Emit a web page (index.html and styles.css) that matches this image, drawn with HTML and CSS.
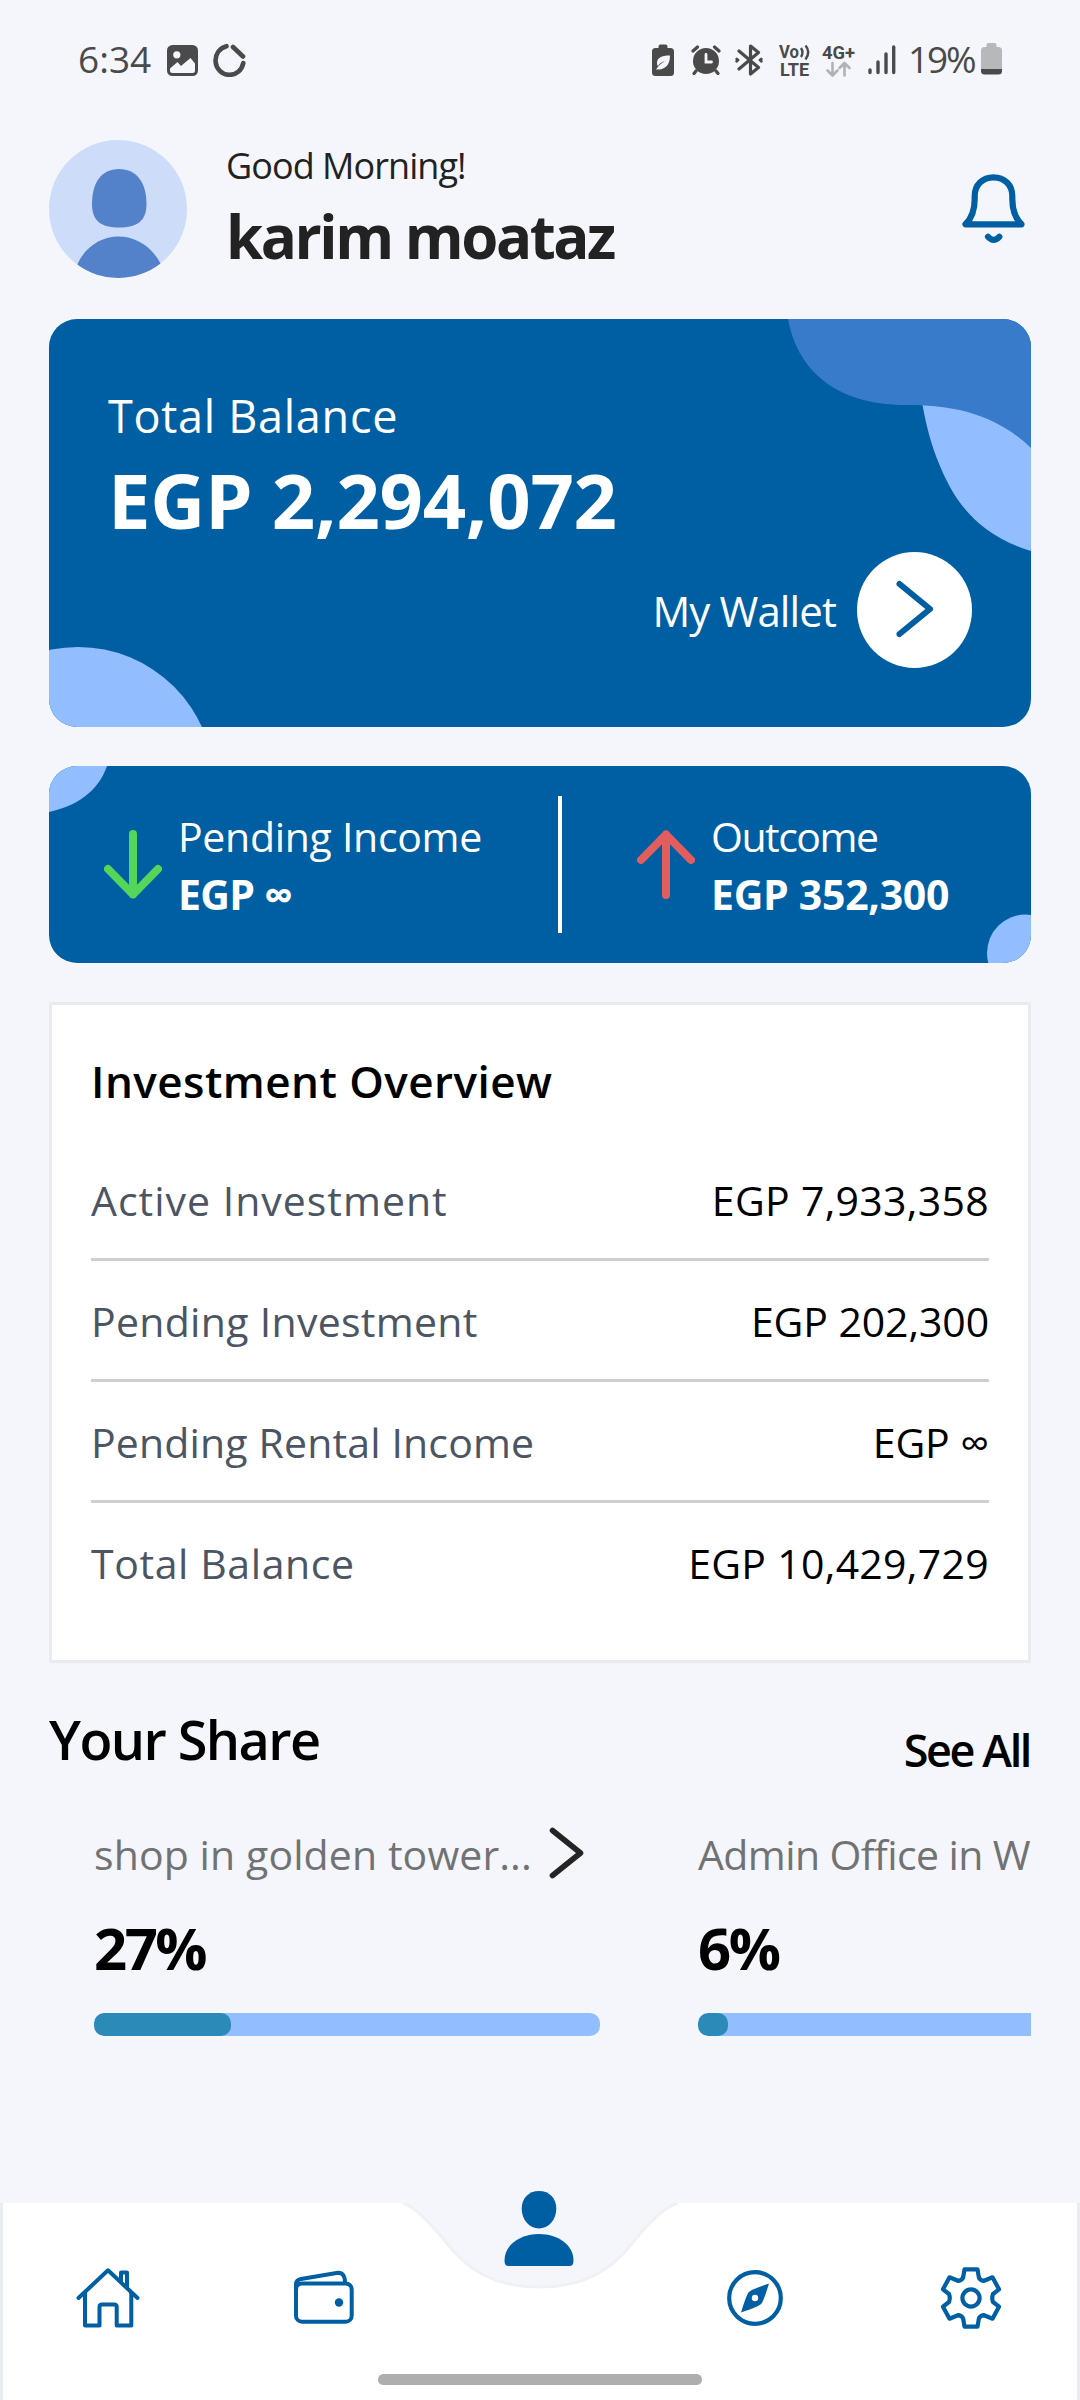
FILE: index.html
```html
<!DOCTYPE html>
<html lang="en">
<head>
<meta charset="utf-8">
<title>Wallet home</title>
<link rel="stylesheet" href="styles.css">
</head>
<body>
<div class="status">
  <span class="status-time">6:34</span>
  <svg class="st-image" width="31" height="31" viewBox="0 0 31 31"><rect width="31" height="31" rx="5.5" fill="#4a4a4a"/><circle cx="9.8" cy="9.8" r="3.6" fill="#f4f6fb"/><path d="M3 23.5L10.5 17L14 21L23.500 13L28 18.500V25.500Q28 28 25.500 28H5.500Q3 28 3 25.500Z" fill="#f4f6fb"/></svg>
  <svg class="st-ring" width="33" height="34" viewBox="0 0 33 34" fill="none" stroke="#4a4a4a" stroke-width="4.600" stroke-linecap="round"><path d="M13.500 3.200A14 14.500 0 1 0 30.300 20"/><path d="M20 4L30 13.500"/></svg>
  <svg class="st-saver" width="22" height="33" viewBox="0 0 22 33"><path d="M6.500 2.500Q6.500 0.500 8.500 0.500H13.500Q15.500 0.500 15.500 2.500V4H18.500Q22 4 22 7.500V28.500Q22 32 18.500 32H3.500Q0 32 0 28.500V7.500Q0 4 3.500 4H6.500Z" fill="#4a4a4a"/><path d="M18 11.500C9 11.500 5 14 5 19C5 20.500 5.500 21.500 6 22C8 19 10 18 13 17C9.500 19 6 22 4 25.500C10 26 18 24 18 11.500Z" fill="#f4f6fb"/></svg>
  <svg class="st-alarm" width="30" height="30" viewBox="0 0 30 30" stroke="#4a4a4a" stroke-linecap="round"><circle cx="15" cy="16" r="13" fill="#4a4a4a" stroke="none"/><path d="M2 6L6.500 2M28 6L23.500 2" stroke-width="3.200"/><path d="M5 26L3 28.500M25 26L27 28.500" stroke-width="3.200"/><path d="M15 9.500V17H20.500" fill="none" stroke="#f4f6fb" stroke-width="2.800"/></svg>
  <svg class="st-bt" width="28" height="32" viewBox="0 0 28 32" fill="none" stroke="#4a4a4a" stroke-width="3.200" stroke-linecap="round" stroke-linejoin="round"><path d="M4 7L23.500 23.500L15.500 30V2L23.500 8.500L4 25"/><path d="M1.700 15L3 16L1.700 17.200M26.300 15L25 16L26.300 17.200" stroke-width="2.800"/></svg>
  <svg class="st-volte" width="32" height="38" viewBox="0 -3 32 38" fill="#4a4a4a"><text class="tiny" x="0" y="14" textLength="20" lengthAdjust="spacingAndGlyphs">Vo</text><text class="tiny" x="1" y="32" textLength="29" lengthAdjust="spacingAndGlyphs">LTE</text><path d="M22 4Q25 8.500 22 13M26.500 1.500Q32 8 26.500 15.500" fill="none" stroke="#4a4a4a" stroke-width="2.400"/></svg>
  <svg class="st-net" width="34" height="38" viewBox="0 -3 34 38"><text class="tiny" x="0" y="14.500" textLength="33" lengthAdjust="spacingAndGlyphs" fill="#4a4a4a">4G+</text><path d="M10.500 19V31M5.500 26.500L10.500 31.500L15.500 26.500M22.500 31.500V19.500M17.500 24L22.500 19L27.500 24" fill="none" stroke="#b0b2b6" stroke-width="2.600" stroke-linecap="round" stroke-linejoin="round"/></svg>
  <svg class="st-signal" width="28" height="30" viewBox="0 0 28 30" stroke="#4a4a4a" stroke-width="3.400" stroke-linecap="round"><path d="M2 25V27.500M10 17V27.500M18 9V27.500M25.700 2V27.500"/></svg>
  <span class="status-pct">19%</span>
  <svg class="st-battery" width="21" height="32" viewBox="0 0 21 32"><path d="M5.500 2Q5.500 0 7.500 0H13.500Q15.500 0 15.500 2V4H17.500Q21 4 21 7.500V26H0V7.500Q0 4 3.500 4H5.500Z" fill="#b7b8ba"/><path d="M0 26H21V28Q21 31.500 17.500 31.500H3.500Q0 31.500 0 28Z" fill="#4a4a4a"/></svg>
</div>

<header class="header">
  <svg class="avatar" width="138" height="138" viewBox="0 0 138 138"><circle cx="69" cy="69" r="69" fill="#cdddf9"/><path d="M70 29C88 29 97.500 43 97.500 64C97.500 81 88 87.500 70 87.500C52 87.500 43 81 43 64C43 43 52 29 70 29Z" fill="#5382ca"/><path d="M28.300 124.500C36 107 52 96.500 69.500 96.500S103 107 111.500 123.500A69 69 0 0 1 28.300 124.500Z" fill="#5382ca"/></svg>
  <div class="hello">
    <div class="greeting">Good Morning!</div>
    <div class="name">karim moataz</div>
  </div>
  <svg class="bell" width="67" height="73" viewBox="0 0 67 73" fill="none" stroke="#005fa2" stroke-width="6.200" stroke-linecap="round" stroke-linejoin="round"><path d="M5.500 52.300H61.500C55 46 52.300 38 52.300 27V24C52.300 13 44.500 5.300 33.500 5.300S14.700 13 14.700 24V27C14.700 38 12 46 5.500 52.300Z"/><path d="M28 64.800Q33.500 71 39.300 64.800"/></svg>
</header>

<section class="balance">
  <svg class="blobs" width="982" height="408" viewBox="0 0 982 408"><path d="M873.500 86C877 104 882 132 901 168C914 192 938 219 982 232V80Z" fill="#92beff"/><path d="M739 0C748 50 786 87 860 86C908 86 949 97 982 129V0Z" fill="#387bca"/><circle cx="29" cy="464" r="136" fill="#92beff"/></svg>
  <div class="balance-label">Total Balance</div>
  <div class="balance-value">EGP 2,294,072</div>
  <div class="wallet">
    <span class="wallet-label">My Wallet</span>
    <span class="wallet-btn"><svg width="38" height="58" viewBox="0 0 38 58" fill="none" stroke="#005fa2" stroke-width="6" stroke-linecap="round" stroke-linejoin="round"><path d="M3.500 4L34 29L3.500 54"/></svg></span>
  </div>
</section>

<section class="flows">
  <svg class="blobs" width="982" height="197" viewBox="0 0 982 197"><path d="M0 0H58C49 26 27 40 0 46Z" fill="#92beff"/><circle cx="976.500" cy="187" r="38.500" fill="#92beff"/></svg>
  <div class="flow flow-in">
    <svg width="58" height="69" viewBox="0 0 58 69" fill="none" stroke="#53d65a" stroke-width="8" stroke-linecap="round" stroke-linejoin="round"><path d="M29 4V64.500M4 39L29 64.500L54 39"/></svg>
    <div class="flow-text"><div class="flow-label pend">Pending Income</div><div class="flow-value inf">EGP ∞</div></div>
  </div>
  <div class="flow-divider"></div>
  <div class="flow flow-out">
    <svg width="58" height="69" viewBox="0 0 58 69" fill="none" stroke="#e25d5d" stroke-width="8" stroke-linecap="round" stroke-linejoin="round"><path d="M29 65V4.500M4 30L29 4.500L54 30"/></svg>
    <div class="flow-text"><div class="flow-label outc">Outcome</div><div class="flow-value">EGP 352,300</div></div>
  </div>
</section>

<section class="overview">
  <h2 class="overview-title">Investment Overview</h2>
  <div class="row"><span class="key key-active">Active Investment</span><span class="val">EGP 7,933,358</span></div>
  <div class="row"><span class="key">Pending Investment</span><span class="val val-tight">EGP 202,300</span></div>
  <div class="row"><span class="key key-rental">Pending Rental Income</span><span class="val val-tight">EGP ∞</span></div>
  <div class="row"><span class="key key-total">Total Balance</span><span class="val">EGP 10,429,729</span></div>
</section>

<div class="share-head">
  <h2 class="share-title">Your Share</h2>
  <span class="see-all">See All</span>
</div>

<div class="shares">
  <article class="share">
    <div class="share-name"><span>shop in golden tower...</span><svg class="chev" width="35" height="52" viewBox="0 0 35 52" fill="none" stroke="#242424" stroke-width="5.600" stroke-linecap="round" stroke-linejoin="round"><path d="M3.500 3.500L31.500 26L3.500 48.500"/></svg></div>
    <div class="share-pct">27%</div>
    <div class="bar"><div class="fill" style="width:27%"></div></div>
  </article>
  <article class="share">
    <div class="share-name office"><span>Admin Office in W</span></div>
    <div class="share-pct">6%</div>
    <div class="bar"><div class="fill" style="width:6%"></div></div>
  </article>
</div>

<nav class="nav">
  <svg class="nav-bg" width="1080" height="197" viewBox="0 0 1080 197"><path d="M0 0H403C416 4 432 22 445 38C468 68 495 84 539.500 84C584 84 611 68 634 38C647 22 663 4 678 0H1080V197H0Z" fill="#fff"/><path d="M403 0C416 4 432 22 445 38C468 68 495 84 539.500 84C584 84 611 68 634 38C647 22 663 4 678 0" fill="none" stroke="#eff1f4" stroke-width="3"/><path d="M1.500 0V197M1078.500 0V197" fill="none" stroke="#e9edf1" stroke-width="3"/></svg>
  <div class="tab"><svg width="64" height="60" viewBox="0 0 64 60" fill="none" stroke="#005fa2" stroke-width="4" stroke-linecap="round" stroke-linejoin="round"><path d="M2.500 30L32 2.300L61.500 30"/><path d="M9 25V57.500H23.500V39Q23.500 36.500 26 36.500H38.200Q40.700 36.500 40.700 39V57.500H55.300V25"/><path d="M45 13V4.500H51V19"/></svg></div>
  <div class="tab"><svg width="60" height="56" viewBox="0 0 60 56" fill="none" stroke="#005fa2" stroke-width="4"><rect x="2" y="13.500" width="55.700" height="38.200" rx="6"/><path d="M2 19V14.500Q2 10 7 9L44 2.700Q51 2.500 51 12.500" stroke-linejoin="round"/><circle cx="45" cy="32.500" r="4.200" fill="#005fa2" stroke="none"/></svg></div>
  <div class="tab tab-me"><svg width="70" height="76" viewBox="0 0 70 76" fill="#005fa2"><path d="M35 0C45.500 0 52.300 7.500 52.300 17.500C52.300 29 44.500 37.500 35 37.500S17.700 29 17.700 17.500C17.700 7.500 24.500 0 35 0Z"/><path d="M35 43C54 43 69.500 54 69.500 69.500Q69.500 75 65.500 75H4.500Q0.500 75 0.500 69.500C0.500 54 16 43 35 43Z"/></svg></div>
  <div class="tab"><svg width="58" height="58" viewBox="-29 -29 58 58"><circle r="25.800" fill="none" stroke="#005fa2" stroke-width="4.200"/><path d="M14 -14.500Q8.500 3.500 6.300 5.800Q4 8.500 -14 14.500Q-8.500 -3.500 -6.300 -5.800Q-4 -8.500 14 -14.500ZM0 -3.200A3.200 3.200 0 1 0 0 3.200A3.200 3.200 0 1 0 0 -3.200Z" fill="#005fa2" fill-rule="evenodd"/></svg></div>
  <div class="tab"><svg width="62" height="64" viewBox="-31 -32 62 64" fill="none" stroke="#005fa2" stroke-width="4.200" stroke-linejoin="round"><path d="M-6.500 -28.700H6.500L7.800 -21Q8.500 -18 12.500 -17L21.500 -20.700L28 -8.700L22 -4Q20.500 0 22 4L28 8.700L21.500 20.700L12.500 17Q8.500 18 7.800 21L6.500 28.700H-6.500L-7.800 21Q-8.500 18 -12.500 17L-21.500 20.700L-28 8.700L-22 4Q-20.500 0 -22 -4L-28 -8.700L-21.500 -20.700L-12.500 -17Q-8.500 -18 -7.800 -21Z"/><circle r="8.600"/></svg></div>
  <div class="home-indicator"></div>
</nav>
</body>
</html>
```
FILE: styles.css
```css
* { box-sizing: border-box; }
body {
  margin: 0;
  width: 1080px;
  height: 2400px;
  overflow: hidden;
  display: flex;
  flex-direction: column;
  background: #f4f6fb;
  font-family: "Open Sans", sans-serif;
  font-size: 41px;
  color: #000;
}
svg { display: block; flex: none; }
h2 { margin: 0; }
span, div { white-space: nowrap; }

/* status bar */
.status {
  height: 120px;
  padding-left: 78px;
  display: flex;
  align-items: center;
  color: #4a4a4a;
  font-size: 37px;
  line-height: 50px;
}
.status-time { width: 89px; margin-top: -3px; }
.st-ring { margin-left: 15px; }
.st-saver { margin-left: 406px; }
.st-alarm { margin-left: 17px; }
.st-bt { margin-left: 14px; }
.st-volte { margin-left: 16px; overflow: visible; }
.st-net { margin-left: 11px; overflow: visible; }
.st-signal { margin-left: 12px; }
.status-pct { width: 73px; margin-left: 12px; margin-top: -3px; letter-spacing: -2.2px; }
.st-battery { margin-top: -2px; }
.tiny { font-family: Roboto, sans-serif; font-weight: 700; font-size: 18.500px; }

/* greeting header */
.header {
  height: 158px;
  padding: 20px 53px 0 49px;
  display: flex;
  align-items: flex-start;
}
.hello { margin-left: 39px; flex: 1; color: #222; }
.greeting { padding-top: 2px; font-size: 36px; line-height: 48px; letter-spacing: -0.95px; }
.name { margin-top: 6px; font-size: 60px; line-height: 80px; font-weight: 700; letter-spacing: -2.46px; }
.bell { margin-top: 32px; }

/* balance card */
.balance {
  position: relative;
  margin: 41px 49px 0;
  height: 408px;
  padding: 67px 59px 0;
  border-radius: 28px;
  overflow: hidden;
  background: #005fa2;
  color: #fff;
}
.blobs { position: absolute; left: 0; top: 0; }
.balance-label { position: relative; font-size: 45px; line-height: 60px; letter-spacing: 0.72px; }
.balance-value { position: relative; margin-top: 4px; font-size: 76px; line-height: 100px; font-weight: 700; letter-spacing: -0.3px; }
.wallet { margin-top: 2px; display: flex; justify-content: flex-end; align-items: center; }
.wallet-label { font-size: 42px; letter-spacing: -0.9px; }
.wallet-btn {
  margin-left: 21px;
  width: 115px;
  height: 116px;
  border-radius: 50%;
  background: #fff;
  display: flex;
  align-items: center;
  justify-content: center;
}
.wallet-btn svg { margin-top: -2px; }

/* income / outcome card */
.flows {
  position: relative;
  margin: 39px 49px 0;
  height: 197px;
  padding-left: 55px;
  display: flex;
  align-items: center;
  border-radius: 28px;
  overflow: hidden;
  background: #005fa2;
  color: #fff;
}
.flow { display: flex; align-items: center; gap: 16px; }
.flow-in { width: 454px; }
.flow-out { margin-left: 75px; }
.flow-divider { width: 4px; height: 137px; background: #fff; }
.flow-label { line-height: 56px; }
.flow-value { margin-top: 2px; line-height: 56px; font-weight: 700; letter-spacing: -0.3px; }
.pend { letter-spacing: -0.3px; }
.outc { letter-spacing: -1.49px; }
.inf { letter-spacing: -0.76px; }

/* investment overview */
.overview {
  margin: 39px 49px 0;
  height: 661px;
  padding: 46px 39px 0;
  border: 3px solid #e9ebef;
  background: #fff;
}
.overview-title { font-size: 44px; line-height: 60px; font-weight: 600; letter-spacing: 0.46px; margin-bottom: 29px; }
.row {
  height: 121px;
  padding-top: 2px;
  display: flex;
  justify-content: space-between;
  align-items: center;
  border-bottom: 3px solid #cfcfcf;
  line-height: 56px;
}
.row:last-child { border-bottom: 0; height: 118px; }
.key { color: #4c5563; letter-spacing: 0.3px; }
.key-active { letter-spacing: 1px; }
.key-rental { letter-spacing: 0.15px; }
.key-total { letter-spacing: 0.6px; }
.val { letter-spacing: 0.3px; }
.val-tight { letter-spacing: -0.1px; }

/* your share */
.share-head { margin: 40px 49px 0; display: flex; justify-content: space-between; height: 72px; }
.share-title { font-size: 54px; line-height: 72px; font-weight: 600; letter-spacing: -1.58px; }
.see-all { margin: 17px 1px 0 0; font-size: 45px; line-height: 60px; font-weight: 600; letter-spacing: -2.4px; }
.shares { margin: 51px 49px 0; padding-left: 45px; display: flex; gap: 98px; overflow: hidden; }
.share { flex: none; width: 506px; }
.share-name { display: flex; align-items: center; height: 56px; line-height: 56px; color: #717274; letter-spacing: 0.1px; }
.share-name span { width: 455px; }
.office { letter-spacing: -0.6px; }
.chev { margin-top: -3px; }
.share-pct { margin-top: 26px; font-size: 58px; line-height: 80px; font-weight: 700; letter-spacing: -2.5px; }
.bar { margin-top: 25px; height: 23px; border-radius: 10px; background: #92beff; overflow: hidden; }
.fill { height: 100%; border-radius: 10px; background: #2c8ab8; }

/* bottom navigation */
.nav {
  position: relative;
  margin-top: auto;
  height: 197px;
  padding: 0 1px 7px 0;
  display: grid;
  grid-template-columns: repeat(5, 1fr);
  align-items: center;
  justify-items: center;
}
.nav-bg { position: absolute; left: 0; top: 0; }
.tab { position: relative; }
.tab-me { align-self: start; margin-top: -12px; }
.home-indicator {
  position: absolute;
  left: 378px;
  bottom: 15px;
  width: 324px;
  height: 11px;
  border-radius: 6px;
  background: #aeaeae;
}
```
